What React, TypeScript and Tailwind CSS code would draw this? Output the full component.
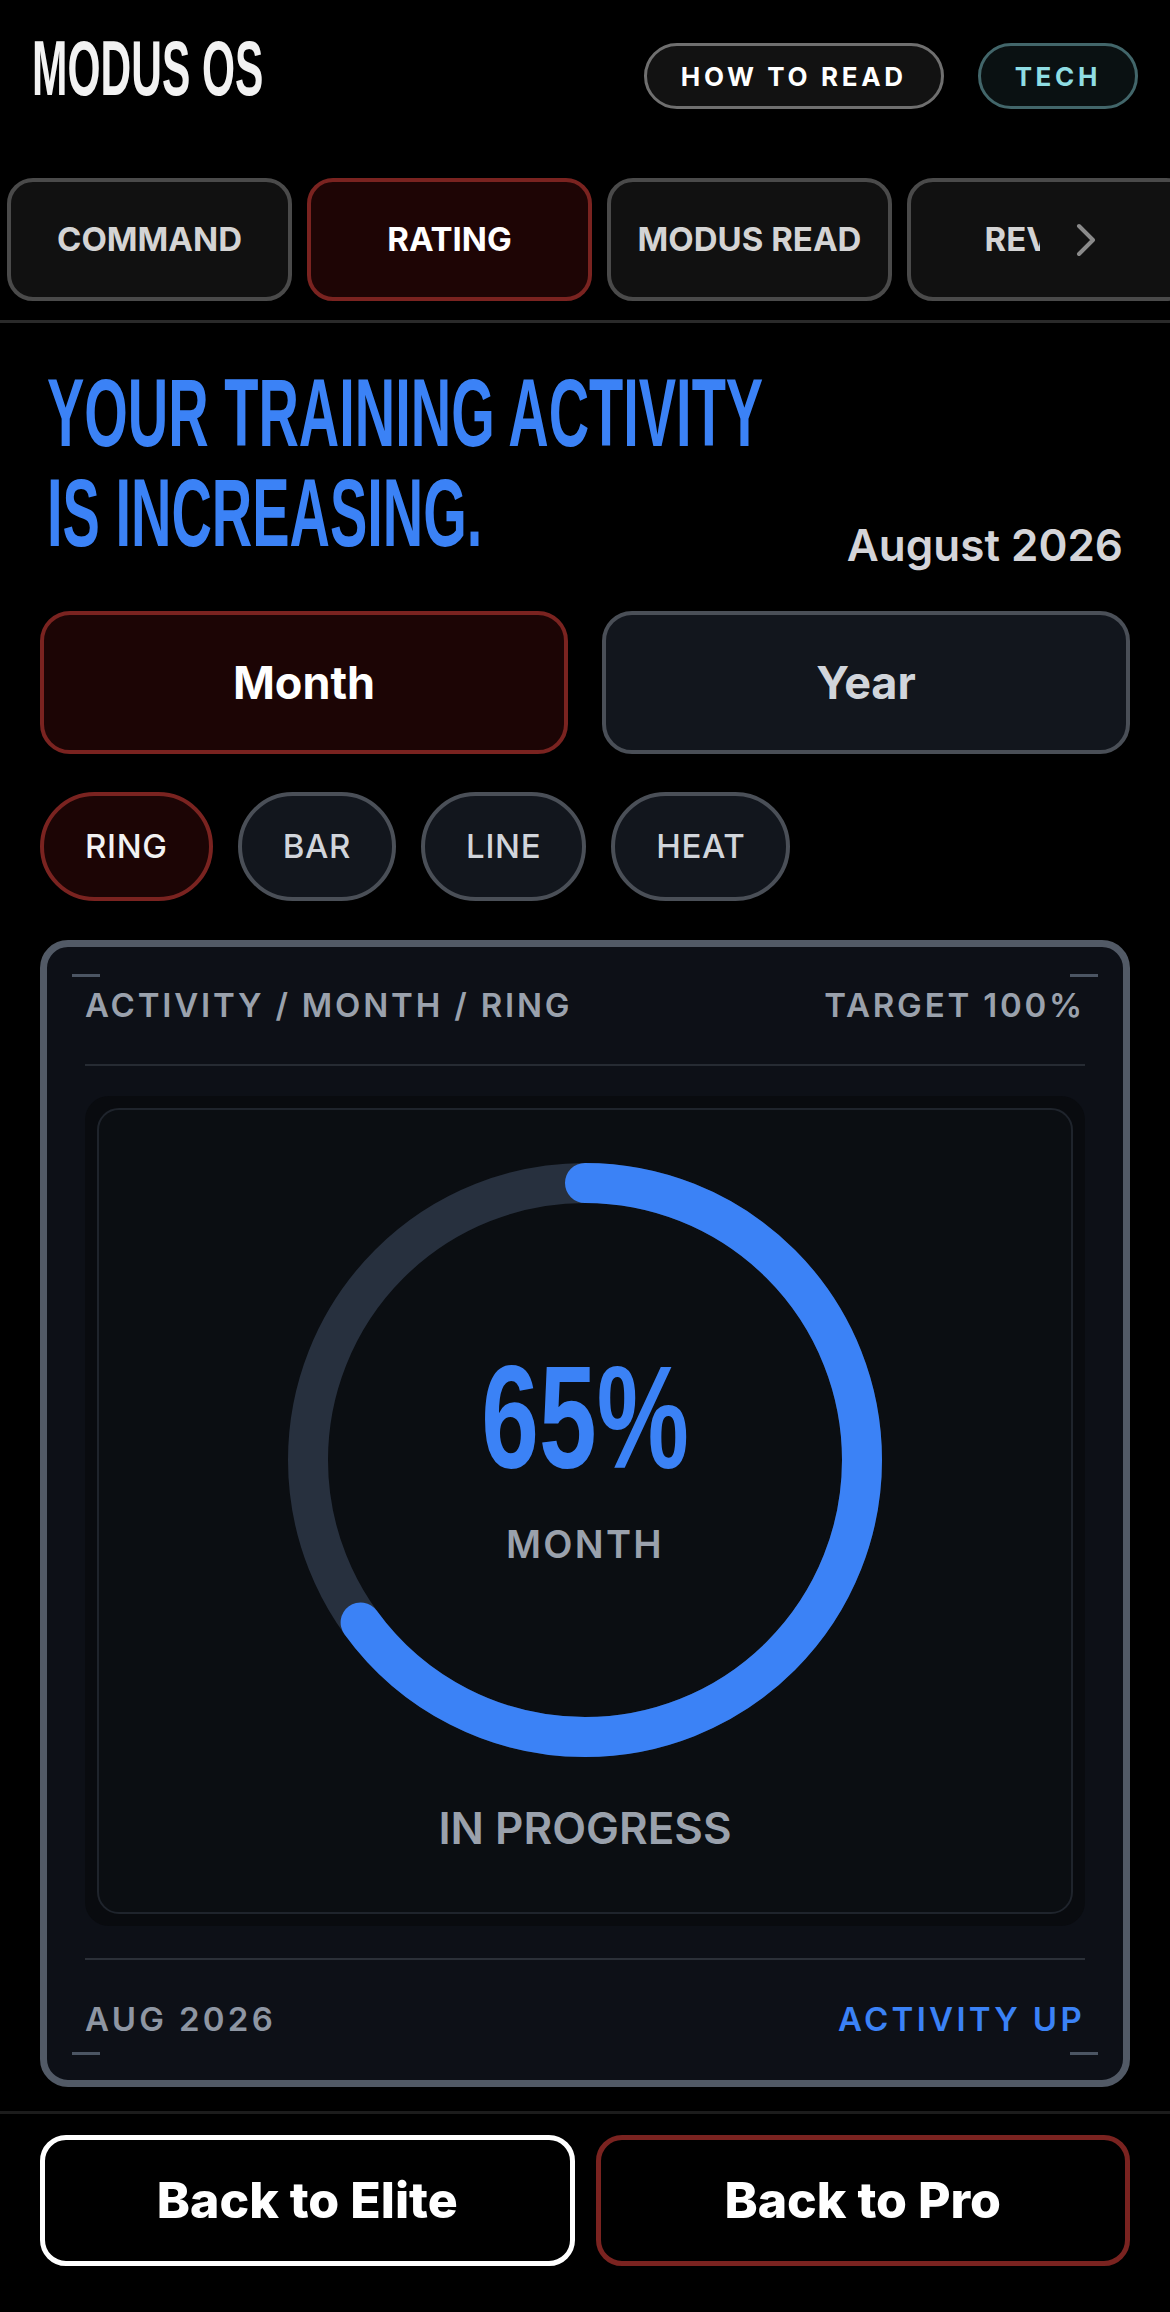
import React from 'react';

const tabs = ['COMMAND', 'RATING', 'MODUS READ', 'REVIEW'];
const charts = ['RING', 'BAR', 'LINE', 'HEAT'];

const RADIUS = 277;
const CIRC = 2 * Math.PI * RADIUS;
const PROGRESS = 0.65;

const ProgressRing: React.FC = () => (
  <div className="relative h-[600px] w-[600px]">
    <svg viewBox="0 0 600 600" className="h-full w-full">
      <circle cx="300" cy="300" r={RADIUS} fill="none" stroke="#27303e" strokeWidth="40" />
      <circle
        cx="300"
        cy="300"
        r={RADIUS}
        fill="none"
        stroke="#3b82f6"
        strokeWidth="40"
        strokeLinecap="round"
        strokeDasharray={`${CIRC * PROGRESS} ${CIRC}`}
        transform="rotate(-90 300 300)"
      />
    </svg>
    {/* center label */}
    <div className="absolute inset-0 flex flex-col items-center justify-center pb-[12px]">
      <span className="inline-block origin-center scale-x-[0.71] font-['Liberation_Sans',Arial,sans-serif] text-[146px] font-bold leading-none text-[#3b82f6]">
        65%
      </span>
      <span className="mt-[34px] text-[38px] font-semibold leading-none tracking-[0.06em] text-[#9aa1ac]">
        MONTH
      </span>
    </div>
  </div>
);

export default function App() {
  return (
    <div className="min-h-[2312px] w-[1170px] overflow-hidden bg-black font-['Inter',sans-serif] text-white">
      {/* Header */}
      <header className="flex h-[152px] items-center justify-between pl-[32px] pr-[32px]">
        <div className="-mt-[16px] w-[230px]">
          <div className="origin-left scale-x-[0.545] whitespace-nowrap font-['Liberation_Sans',Arial,sans-serif] text-[78px] font-bold leading-none text-[#f2f2f2]">
            MODUS OS
          </div>
        </div>
        <div className="flex items-center gap-[34px]">
          <button className="flex h-[66px] items-center rounded-full border-[3px] border-[#6f6f6f] bg-[#121212] px-[34px] text-[26px] font-bold tracking-[0.14em] text-white">
            HOW TO READ
          </button>
          <button className="flex h-[66px] items-center rounded-full border-[3px] border-[#42666a] bg-[#0a1112] px-[34px] text-[26px] font-bold tracking-[0.14em] text-[#8fdde3]">
            TECH
          </button>
        </div>
      </header>

      {/* Section tabs */}
      <nav className="relative mt-[26px] flex gap-[15px] pl-[7px]">
        {tabs.map((t) => (
          <div
            key={t}
            className={
              t === 'RATING'
                ? 'flex h-[123px] w-[285px] shrink-0 items-center justify-center rounded-[26px] border-[4px] border-[#7a2320] bg-[#1e0505] text-[33px] font-bold text-white'
                : 'flex h-[123px] w-[285px] shrink-0 items-center justify-center rounded-[26px] border-[4px] border-[#4a4a4a] bg-[#111111] text-[33px] font-bold text-[#d4d4d4]'
            }
          >
            {t}
          </div>
        ))}
        <div className="absolute bottom-[4px] right-0 top-[4px] flex w-[130px] items-center bg-[#111111] pl-[35px]">
          <svg width="22" height="34" viewBox="0 0 22 34" fill="none">
            <path d="M4 3 L18 17 L4 31" stroke="#8a8a8a" strokeWidth="4" strokeLinecap="round" strokeLinejoin="round" />
          </svg>
        </div>
      </nav>
      <div className="mt-[19px] h-[3px] bg-[#2a2a2a]" />

      {/* Title */}
      <section className="mt-[40px] flex items-end justify-between pl-[47px] pr-[47px]">
        <div className="w-[712px] shrink-0 font-['Liberation_Sans',Arial,sans-serif] text-[96px] font-bold leading-[100px] text-[#3b82f6]">
          <div className="origin-left scale-x-[0.583] whitespace-nowrap">YOUR TRAINING ACTIVITY</div>
          <div className="origin-left scale-x-[0.583] whitespace-nowrap">IS INCREASING.</div>
        </div>
        <div className="-mb-[4px] text-[44px] font-semibold leading-none text-[#d4d4d8]">August 2026</div>
      </section>

      {/* Period toggle */}
      <div className="mt-[48px] grid grid-cols-2 gap-[34px] px-[40px]">
        <button className="h-[143px] rounded-[30px] border-[4px] border-[#7a2320] bg-[#1c0505] text-[45px] font-bold text-white">
          Month
        </button>
        <button className="h-[143px] rounded-[30px] border-[4px] border-[#4a4f57] bg-[#12161d] text-[45px] font-bold text-[#d1d5db]">
          Year
        </button>
      </div>

      {/* Chart type pills */}
      <div className="mt-[38px] flex gap-[25px] px-[40px]">
        {charts.map((c) => (
          <button
            key={c}
            className={
              c === 'RING'
                ? 'h-[109px] rounded-full border-[4px] border-[#7a2320] bg-[#1c0505] px-[41px] text-[33px] font-medium tracking-[0.02em] text-[#f2f2f2]'
                : 'h-[109px] rounded-full border-[4px] border-[#4a4f57] bg-[#12161d] px-[41px] text-[33px] font-medium tracking-[0.02em] text-[#d1d5db]'
            }
          >
            {c}
          </button>
        ))}
      </div>

      {/* Activity card */}
      <div className="relative mx-[40px] mt-[39px] rounded-[28px] border-[7px] border-[#525a66] bg-[#0d1017] px-[38px] pb-[41px] pt-[38px]">
        <span className="absolute left-[25px] top-[27px] h-[3px] w-[28px] bg-[#4b5563]" />
        <span className="absolute right-[25px] top-[27px] h-[3px] w-[28px] bg-[#4b5563]" />
        <span className="absolute bottom-[25px] left-[25px] h-[3px] w-[28px] bg-[#4b5563]" />
        <span className="absolute bottom-[25px] right-[25px] h-[3px] w-[28px] bg-[#4b5563]" />

        <div className="flex items-center justify-between text-[33px] font-semibold leading-[40px] tracking-[0.085em] text-[#9aa1ac]">
          <span>ACTIVITY / MONTH / RING</span>
          <span>TARGET 100%</span>
        </div>
        <div className="mt-[39px] h-[2px] bg-[#262b33]" />

        <div className="mt-[30px] rounded-[24px] bg-[#090b0f] p-[12px]">
          <div className="flex flex-col items-center rounded-[22px] border-[2px] border-[#1f242c] bg-[#0b0e12] pb-[57px] pt-[50px]">
            <ProgressRing />
            <div className="mt-[42px] text-[44px] font-semibold leading-[53px] text-[#9aa1ac]">IN PROGRESS</div>
          </div>
        </div>

        <div className="mt-[32px] h-[2px] bg-[#2b3038]" />
        <div className="mt-[39px] flex items-center justify-between text-[33px] font-semibold leading-[40px] tracking-[0.1em]">
          <span className="text-[#8e96a3]">AUG 2026</span>
          <span className="text-[#3b82f6]">ACTIVITY UP</span>
        </div>
      </div>

      {/* Footer actions */}
      <div className="mt-[24px] h-[3px] bg-[#1c1c1c]" />
      <div className="mt-[21px] flex gap-[21px] px-[40px]">
        <button className="h-[131px] flex-1 rounded-[26px] border-[5px] border-white bg-black text-[50px] font-extrabold text-white">
          Back to Elite
        </button>
        <button className="h-[131px] flex-1 rounded-[26px] border-[5px] border-[#7a2320] bg-black text-[50px] font-extrabold text-white">
          Back to Pro
        </button>
      </div>
    </div>
  );
}
